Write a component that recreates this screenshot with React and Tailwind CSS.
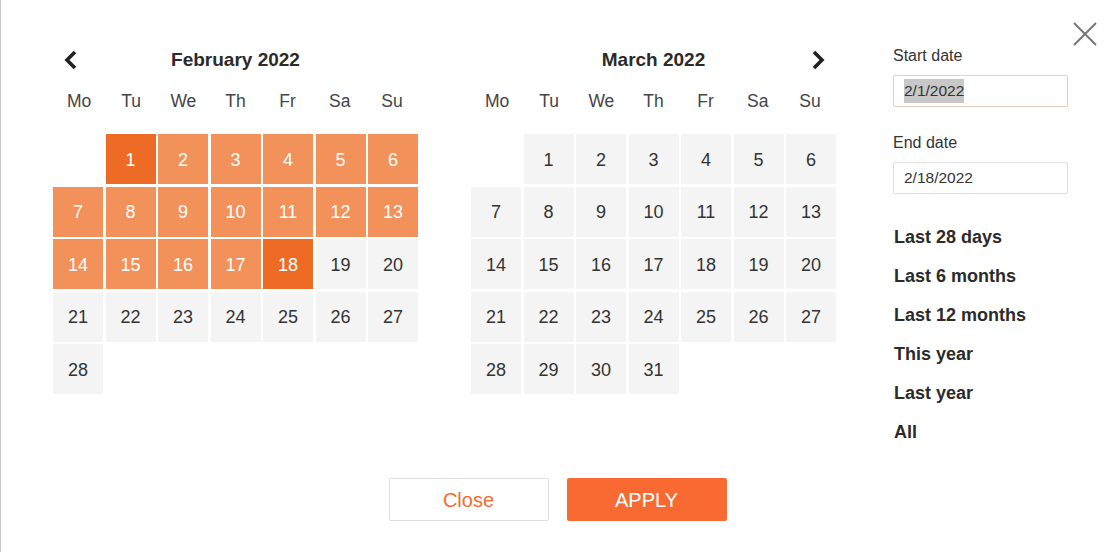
import React from 'react';

const WEEKDAYS = ['Mo', 'Tu', 'We', 'Th', 'Fr', 'Sa', 'Su'];
const PRESETS = ['Last 28 days', 'Last 6 months', 'Last 12 months', 'This year', 'Last year', 'All'];

function Chevron({ dir }) {
  return (
    <svg width="16" height="20" viewBox="0 0 16 20" fill="none">
      <polyline
        points={dir === 'left' ? '12,2 4,10 12,18' : '4,2 12,10 4,18'}
        stroke="#222"
        strokeWidth="3.6"
        strokeLinecap="butt"
        strokeLinejoin="miter"
      />
    </svg>
  );
}

function Month({ title, offset, days, range, edges, arrow }) {
  const cells = [];
  for (let i = 0; i < offset; i++) cells.push(<div key={'e' + i} />);
  for (let d = 1; d <= days; d++) {
    const edge = edges.includes(d);
    const inRange = d >= range[0] && d <= range[1];
    const tone = edge
      ? 'bg-[#ed6b25] text-white'
      : inRange
        ? 'bg-[#f3915a] text-white'
        : 'bg-[#f4f4f4] text-[#333]';
    cells.push(
      <div key={d} className={`flex h-[50px] items-center justify-center pt-[2px] text-[18px] ${tone}`}>
        {d}
      </div>
    );
  }

  return (
    <div className="mt-[2px] w-[365px]">
      <div className="flex h-[24px] items-center">
        <div className="flex w-[36px] justify-center">{arrow === 'left' && <Chevron dir="left" />}</div>
        <div className="flex-1 text-center text-[19px] font-bold text-[#2b2b2b]">{title}</div>
        <div className="flex w-[36px] justify-center">{arrow === 'right' && <Chevron dir="right" />}</div>
      </div>
      <div className="mt-[16px] grid h-[24px] grid-cols-7 items-center text-center text-[17.5px] text-[#444]">
        {WEEKDAYS.map((w) => (
          <span key={w}>{w}</span>
        ))}
      </div>
      <div className="mt-[22px] grid grid-cols-7 gap-[2.5px]">{cells}</div>
    </div>
  );
}

export default function App() {
  return (
    <div
      className="relative flex h-[552px] w-[1114px] flex-col border-l border-[#c8c8c8] bg-white"
      style={{ fontFamily: '"Liberation Sans", Arial, sans-serif' }}
    >
      <button type="button" className="absolute right-[16px] top-[21px] text-[#777]">
        <svg width="26" height="26" viewBox="0 0 26 26">
          <path d="M2 2 L24 24 M24 2 L2 24" stroke="#777" strokeWidth="2" />
        </svg>
      </button>

      <div className="flex pl-[52px] pt-[46px]">
        <Month title="February 2022" offset={1} days={28} range={[1, 18]} edges={[1, 18]} arrow="left" />
        <div className="w-[53px]" />
        <Month title="March 2022" offset={1} days={31} range={[0, -1]} edges={[]} arrow="right" />

        <div className="ml-[57px] w-[175px] text-[#333]">
          <div className="h-[20px] text-[16px] leading-[20px]">Start date</div>
          <div className="mt-[9px] flex h-[32px] items-center rounded-[2px] border border-[#ebcdbb] px-[10px] text-[15.5px]">
            <span className="bg-[#c8c8c8]">2/1/2022</span>
          </div>
          <div className="mt-[26px] h-[20px] text-[16px] leading-[20px]">End date</div>
          <div className="mt-[9px] flex h-[32px] items-center rounded-[2px] border border-[#dddddd] px-[10px] text-[15.5px]">
            2/18/2022
          </div>
          <div className="mt-[31px] flex flex-col gap-[15px]">
            {PRESETS.map((p) => (
              <div key={p} className="h-[24px] pl-[1px] text-[18px] font-bold leading-[24px] text-[#2b2b2b]">
                {p}
              </div>
            ))}
          </div>
        </div>
      </div>

      <div className="mt-[34px] flex justify-center gap-[18px]">
        <button
          type="button"
          className="h-[43px] w-[160px] rounded-[2px] border border-[#dddddd] bg-white text-[20px] text-[#f96a33]"
        >
          Close
        </button>
        <button type="button" className="h-[43px] w-[160px] rounded-[2px] bg-[#f96a33] text-[20px] text-white">
          APPLY
        </button>
      </div>
    </div>
  );
}
